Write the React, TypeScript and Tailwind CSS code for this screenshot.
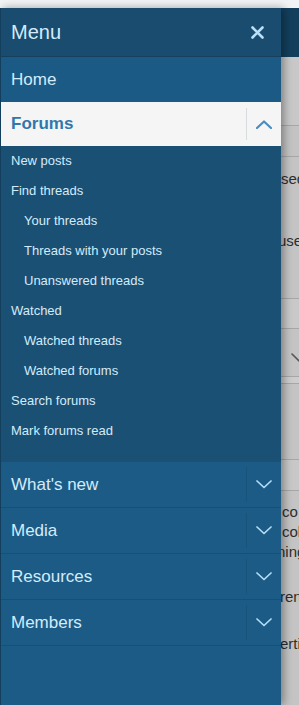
import type { ReactNode } from "react";

const font = { fontFamily: '"Liberation Sans", Arial, Helvetica, sans-serif' };

const forumLinks: { label: string; sub?: boolean }[] = [
  { label: "New posts" },
  { label: "Find threads" },
  { label: "Your threads", sub: true },
  { label: "Threads with your posts", sub: true },
  { label: "Unanswered threads", sub: true },
  { label: "Watched" },
  { label: "Watched threads", sub: true },
  { label: "Watched forums", sub: true },
  { label: "Search forums" },
  { label: "Mark forums read" },
];

const sections = ["What's new", "Media", "Resources", "Members"];

function Chevron({ up, className }: { up?: boolean; className: string }) {
  return (
    <svg width="16" height="9" viewBox="0 0 16 9" fill="none" className={className}>
      <path
        d={up ? "M1 8 L8 1.5 L15 8" : "M1 1 L8 7.5 L15 1"}
        stroke="currentColor"
        strokeWidth={up ? 2.2 : 1.7}
        strokeLinecap="round"
        strokeLinejoin="round"
      />
    </svg>
  );
}

function Line() {
  return <div className="h-px bg-[#a7a7a7]" />;
}

function Frag({ children, className = "" }: { children: ReactNode; className?: string }) {
  return (
    <div className={`h-5 whitespace-nowrap text-[15px] leading-5 text-[#2e2e2e] ${className}`}>
      {children}
    </div>
  );
}

export default function App() {
  return (
    <div className="flex h-[705px] w-[299px] flex-col overflow-hidden bg-[#c4c4c4]" style={font}>
      <div className="h-2 shrink-0 bg-[#f2f3f4]" />
      <div className="flex min-h-0 flex-1">
        {/* off-canvas menu */}
        <div className="relative z-10 flex w-[281px] shrink-0 flex-col border-l border-[#143f5c] bg-[#1c5b86] shadow-[3px_0_8px_rgba(0,0,0,0.35)]">
          <div className="flex h-[49px] shrink-0 items-center justify-between border-b border-[#153f5c] bg-[#194c6f] pl-[10px] pr-[17px]">
            <span className="text-[20px] text-[#d3ebfa]">Menu</span>
            <svg width="13" height="13" viewBox="0 0 13 13" className="text-[#b9e0f8]">
              <path d="M1.5 1.5 L11.5 11.5 M11.5 1.5 L1.5 11.5" stroke="currentColor" strokeWidth="2.6" strokeLinecap="round" />
            </svg>
          </div>

          <div className="flex h-[45px] shrink-0 items-center bg-[#1b5a85] pl-[10px] text-[17px] text-[#d3ebfa]">
            Home
          </div>

          <div className="flex h-[44px] shrink-0 items-center bg-[#f5f5f5]">
            <span className="flex-1 pl-[10px] text-[17px] font-bold text-[#2f78ad]">Forums</span>
            <div className="my-[6px] w-px self-stretch bg-[#d6dbde]" />
            <div className="flex w-[34px] items-center justify-center">
              <Chevron up className="text-[#4a8cbc]" />
            </div>
          </div>

          <div className="shrink-0 bg-[#1a5074] pb-4">
            {forumLinks.map((l) => (
              <div
                key={l.label}
                className={`flex h-[30px] items-center text-[13px] text-[#d3ebfa] ${l.sub ? "pl-[23px]" : "pl-[10px]"}`}
              >
                {l.label}
              </div>
            ))}
          </div>

          {sections.map((s) => (
            <div key={s} className="flex h-[46px] shrink-0 items-center border-b border-[#184f75]">
              <span className="flex-1 pl-[10px] text-[17px] text-[#d3ebfa]">{s}</span>
              <div className="my-[5px] w-px self-stretch bg-[#1a5379]" />
              <div className="flex w-[34px] items-center justify-center">
                <Chevron className="text-[#b3def8]" />
              </div>
            </div>
          ))}
          <div className="flex-1" />
        </div>

        {/* page behind the overlay */}
        <div className="flex min-w-0 flex-1 flex-col overflow-hidden">
          <div className="h-[49px] shrink-0 bg-[#133f5d]" />
          <div className="h-[68px] shrink-0 bg-[#c8c8c8]" />
          <Line />
          <div className="h-[30px] shrink-0 bg-[#c3c3c3]" />
          <Line />
          <div className="h-3 shrink-0" />
          <Frag>sed</Frag>
          <div className="h-[42px] shrink-0" />
          <Frag className="-ml-[3px]">use</Frag>
          <div className="h-[47px] shrink-0" />
          <Line />
          <div className="h-[29px] shrink-0 bg-[#c9c9c9]" />
          <Line />
          <div className="h-[18px] shrink-0" />
          <div className="h-5 shrink-0 pl-[10px] pt-[6px]">
            <svg width="10" height="10" viewBox="0 0 10 10">
              <path d="M1 1 L8 8" stroke="#555" strokeWidth="1.6" strokeLinecap="round" />
            </svg>
          </div>
          <div className="h-[9px] shrink-0" />
          <Line />
          <div className="h-[6px] shrink-0 bg-[#cdcdcd]" />
          <Line />
          <div className="h-[75px] shrink-0" />
          <Line />
          <div className="h-[30px] shrink-0 bg-[#c8c8c8]" />
          <Line />
          <div className="h-[11px] shrink-0" />
          <Frag className="pl-px">co</Frag>
          <Frag className="pl-px">col</Frag>
          <Frag className="-ml-[4px]">ning</Frag>
          <div className="h-[25px] shrink-0" />
          <Frag className="-ml-[1px]">ren</Frag>
          <div className="h-[27px] shrink-0" />
          <Frag className="-ml-[1px]">ertic</Frag>
        </div>
      </div>
    </div>
  );
}
